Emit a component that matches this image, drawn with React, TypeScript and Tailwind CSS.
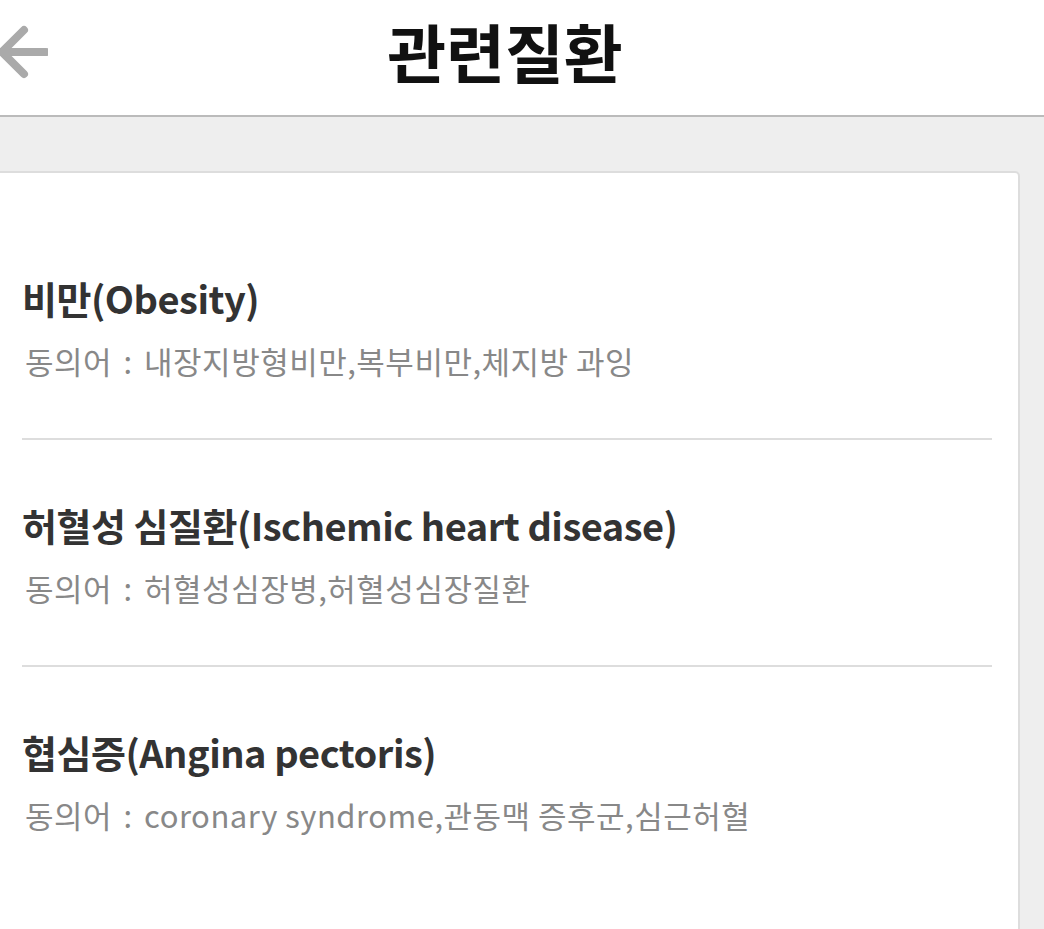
const diseases = [
  { name: "비만(Obesity)", syn: "내장지방형비만,복부비만,체지방 과잉" },
  { name: "허혈성 심질환(Ischemic heart disease)", syn: "허혈성심장병,허혈성심장질환" },
  { name: "협심증(Angina pectoris)", syn: "coronary syndrome,관동맥 증후군,심근허혈" },
];

export default function App() {
  return (
    <div
      className="min-h-[929px] bg-[#eeeeee] overflow-hidden"
      style={{ fontFamily: '"Noto Sans CJK KR", "Noto Sans", sans-serif' }}
    >
      <header className="h-[117px] bg-white border-b-2 border-[#bbbbbb] flex items-center">
        <svg width="52" height="56" viewBox="0 0 52 56" className="-ml-[4px] -mt-[12px] shrink-0">
          <g stroke="#aaaaaa" strokeWidth="8" strokeLinecap="round" strokeLinejoin="round" fill="none">
            <path d="M8 28 H50" />
            <path d="M28 6 L6 28 L28 50" />
          </g>
        </svg>
        <h1 className="flex-1 mr-[82px] pb-[16px] text-center text-[64px] font-bold text-[#111111] leading-none">
          관련질환
        </h1>
      </header>

      <div className="pt-[54px] pr-[24px]">
        <div className="-ml-[20px] bg-white border-2 border-[#dddddd] rounded-[5px] min-h-[800px] pt-[40px] pl-[40px] pr-[26px]">
          {diseases.map((d, i) => (
            <div
              key={d.name}
              className={
                "pt-[60px] pb-[57px] " + (i < diseases.length - 1 ? "border-b-2 border-[#dddddd]" : "")
              }
            >
              <div className="text-[38px] leading-[50px] font-bold text-[#333333] tracking-[-0.5px]">{d.name}</div>
              <div className="mt-[18px] text-[31px] leading-[40px] text-[#888888] tracking-[0.5px] pl-[3px]">
                동의어<span className="px-[4px]"> : </span>{d.syn}
              </div>
            </div>
          ))}
        </div>
      </div>
    </div>
  );
}
